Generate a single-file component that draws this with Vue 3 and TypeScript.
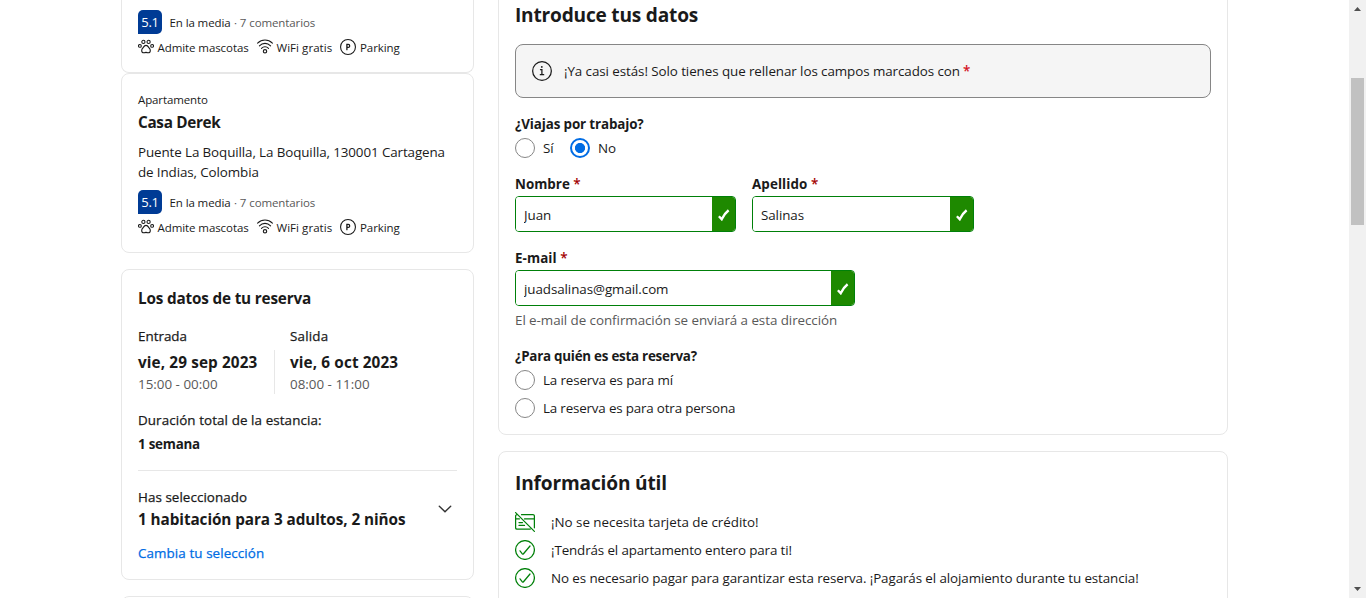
<script setup lang="ts">
import { ref } from 'vue'

interface Stay {
  kind?: string
  name?: string
  address?: [string, string]
}

const stays: Stay[] = [
  {},
  {
    kind: 'Apartamento',
    name: 'Casa Derek',
    address: ['Puente La Boquilla, La Boquilla, 130001 Cartagena', 'de Indias, Colombia'],
  },
]
const business = ref<'si' | 'no'>('no')
const guest = ref<'me' | 'other' | ''>('')
const firstName = ref('Juan')
const lastName = ref('Salinas')
const email = ref('juadsalinas@gmail.com')
</script>

<template>
  <div class="page">
    <main class="columns">
      <aside class="side">
        <section v-for="(stay, n) in stays" :key="n" class="card stay" :class="{ compact: !stay.name }">
          <template v-if="stay.name && stay.address">
            <div class="kind">{{ stay.kind }}</div>
            <div class="stay-name">{{ stay.name }}</div>
            <div class="address">{{ stay.address[0] }}<br />{{ stay.address[1] }}</div>
          </template>
          <div class="review">
            <span class="score">5.1</span>
            <span class="rating">En la media</span>
            <span class="reviews">· 7 comentarios</span>
          </div>
          <div class="facilities">
            <span class="facility pets">
              <svg class="ico" viewBox="0 0 16 16">
                <circle cx="5.4" cy="2.9" r="1.6" />
                <circle cx="10.6" cy="2.9" r="1.6" />
                <circle cx="1.9" cy="6.9" r="1.4" />
                <circle cx="14.1" cy="6.9" r="1.4" />
                <path d="M8 6.4c-1.500 0-2.100 1-2.700 2-.5.9-1.600 1.400-1.600 3 0 1.500 1 2.400 2.200 2.400.8 0 1.300-.4 2.100-.4s1.300.4 2.100.4c1.200 0 2.200-.9 2.200-2.400 0-1.600-1.100-2.100-1.600-3-.6-1-1.200-2-2.700-2z" />
              </svg>
              Admite mascotas
            </span>
            <span class="facility wifi">
              <svg class="ico" viewBox="0 0 16 16">
                <path d="M.6 4.100C4.900-.1 11.100-.1 15.400 4.100M2.400 6.800c3.200-3.200 8-3.200 11.200 0M4.500 9.300c2-2 5-2 7 0" />
                <circle cx="8" cy="12.300" r="1.700" />
              </svg>
              WiFi gratis
            </span>
            <span class="facility parking">
              <svg class="ico" viewBox="0 0 16 16">
                <circle cx="8" cy="8" r="7.450" />
                <path class="heavy" d="M6.900 10.700V5.400h1.300a1.500 1.500 0 0 1 0 3H6.900" />
              </svg>
              Parking
            </span>
          </div>
        </section>

        <section class="card booking">
          <h3 class="booking-title">Los datos de tu reserva</h3>
          <div class="dates">
            <div class="date">
              <div class="medium">Entrada</div>
              <div class="day">vie, 29 sep 2023</div>
              <div class="hours">15:00 - 00:00</div>
            </div>
            <div class="date out">
              <div class="medium out-label">Salida</div>
              <div class="day">vie, 6 oct 2023</div>
              <div class="hours">08:00 - 11:00</div>
            </div>
          </div>
          <div class="medium duration">Duración total de la estancia:</div>
          <div class="weeks">1 semana</div>
          <div class="selection">
            <div>
              <div class="medium chosen">Has seleccionado</div>
              <div class="room">1 habitación para 3 adultos, 2 niños</div>
            </div>
            <svg class="chevron" viewBox="0 0 24 24"><path d="M6.300 9.200l5.700 5.600 5.700-5.600" /></svg>
          </div>
          <a class="medium change">Cambia tu selección</a>
        </section>

        <section class="card next"></section>
      </aside>

      <div class="content">
        <section class="card form">
          <h2 class="heading intro">Introduce tus datos</h2>
          <div class="notice">
            <svg class="ico20" viewBox="0 0 20 20">
              <circle cx="10" cy="10" r="9.350" />
              <path d="M8.500 8.700h1.400v4.600M8.300 13.700h3.400" />
              <circle class="dot" cx="9.800" cy="5.900" r=".9" />
            </svg>
            <span class="almost">¡Ya casi estás! Solo tienes que rellenar los campos marcados con</span>
            <span class="star bright">*</span>
          </div>

          <div class="label trip">¿Viajas por trabajo?</div>
          <div class="radios">
            <label class="option yes"><input v-model="business" type="radio" value="si" class="radio" />Sí</label>
            <label class="option"><input v-model="business" type="radio" value="no" class="radio" />No</label>
          </div>

          <div class="fields">
            <div class="field first">
              <div class="label">Nombre <span class="star">*</span></div>
              <div class="box"><input v-model="firstName" class="text" /><span class="ok"><svg viewBox="0 0 12 12"><path d="M.9 7.200L3.700 10.200Q6.300 4.800 10.600 1.300" /></svg></span></div>
            </div>
            <div class="field last">
              <div class="label surname">Apellido <span class="star">*</span></div>
              <div class="box"><input v-model="lastName" class="text" /><span class="ok"><svg viewBox="0 0 12 12"><path d="M.9 7.200L3.700 10.200Q6.300 4.800 10.600 1.300" /></svg></span></div>
            </div>
          </div>
          <div class="field mail">
            <div class="label mail-label">E-mail <span class="star">*</span></div>
            <div class="box"><input v-model="email" class="text" /><span class="ok"><svg viewBox="0 0 12 12"><path d="M.9 7.200L3.700 10.200Q6.300 4.800 10.600 1.300" /></svg></span></div>
          </div>
          <div class="help">El e-mail de confirmación se enviará a esta dirección</div>

          <div class="label who">¿Para quién es esta reserva?</div>
          <div class="stack">
            <label class="option me"><input v-model="guest" type="radio" value="me" class="radio" />La reserva es para mí</label>
            <label class="option other"><input v-model="guest" type="radio" value="other" class="radio" />La reserva es para otra persona</label>
          </div>
        </section>

        <section class="card info">
          <h2 class="heading useful">Información útil</h2>
          <ul class="facts">
            <li class="fact f1">
              <svg class="ico20 green" viewBox="0 0 20 20">
                <path d="M6.500 2.700H18a1.400 1.400 0 0 1 1.400 1.400v11.700M2.300 2.700H2A1.400 1.400 0 0 0 .6 4.100v11.600a1.400 1.400 0 0 0 1.400 1.400h13.300M.6 6.900h3.800M9.500 6.900h9.900M4 10.600h3.500M4 13.400h5.500M.6.600l18.800 18.800" />
              </svg>
              ¡No se necesita tarjeta de crédito!
            </li>
            <li class="fact f2">
              <svg class="ico20 green" viewBox="0 0 20 20"><circle cx="10" cy="10" r="9.400" /><path d="M5 10.800l2.500 3.200c.2.300.6.300.8 0L15 6" /></svg>
              ¡Tendrás el apartamento entero para ti!
            </li>
            <li class="fact f3">
              <svg class="ico20 green" viewBox="0 0 20 20"><circle cx="10" cy="10" r="9.400" /><path d="M5 10.800l2.500 3.200c.2.300.6.300.8 0L15 6" /></svg>
              No es necesario pagar para garantizar esta reserva. ¡Pagarás el alojamiento durante tu estancia!
            </li>
          </ul>
        </section>
      </div>
    </main>

    <div class="scrollbar">
      <svg class="arrow" viewBox="0 0 17 17"><path d="M5 11l3.500-4 3.500 4z" /></svg>
      <div class="track"><div class="thumb"></div></div>
      <svg class="arrow" viewBox="0 0 17 17"><path d="M5 6l3.500 4L12 6z" /></svg>
    </div>
  </div>
</template>

<style>
body { margin: 0; overflow: hidden; }
</style>

<style scoped>
* { box-sizing: border-box; }
.page {
  display: flex;
  height: 598px;
  overflow: hidden;
  background: #fff;
  color: #1a1a1a;
  font: 400 13.4px/20px "Open Sans", "Noto Sans", sans-serif;
  white-space: nowrap;
}
.columns { display: flex; flex: 1; gap: 24px; padding-left: 121px; }
.side { width: 353px; }
.content { width: 730px; margin-top: -16px; }
.card { border: 1px solid #e7e7e7; border-radius: 8px; padding: 16px; }
h2, h3, ul { margin: 0; padding: 0; }

.stay { height: 180px; }
.compact { height: 73px; padding-top: 2px; border-top: 0; border-radius: 0 0 8px 8px; }
.kind { margin-top: 1px; font-size: 11.5px; line-height: 18px; letter-spacing: -.12px; }
.stay-name { margin-top: 1px; font-weight: 700; font-size: 15.3px; line-height: 24px; letter-spacing: -.32px; }
.address { margin-top: 8px; letter-spacing: -.11px; }
.review { display: flex; align-items: center; height: 24px; margin-top: 8px; font-size: 11.5px; letter-spacing: -.1px; }
.score {
  width: 24px; height: 24px; margin-right: 7.500px;
  border-radius: 5px 5px 5px 0;
  background: #003b95; color: #fff;
  font-size: 13px; font-weight: 500; line-height: 25px; text-align: center; letter-spacing: -.3px;
}
.rating { margin-right: 3.500px; padding-top: 1px; }
.reviews { padding-top: 1px; color: #595959; }
.facilities { display: flex; height: 20px; margin-top: 4px; font-size: 11.5px; }
.facility { display: flex; align-items: center; gap: 3.500px; }
.pets { width: 119px; letter-spacing: -.08px; }
.wifi { width: 83px; letter-spacing: .05px; }
.parking { gap: 4px; letter-spacing: -.07px; }
.ico { width: 16px; height: 16px; flex: none; margin-top: -2px; fill: none; stroke: #1a1a1a; stroke-width: 1.100; stroke-linecap: round; }
.heavy { stroke-width: 1.300; }

.booking { height: 311px; margin-top: 16px; }
.booking-title { font-weight: 700; font-size: 15.3px; line-height: 24px; letter-spacing: -.18px; }
.dates { display: grid; grid-template-columns: 136px 1fr; margin-top: 16px; }
.date { display: flex; flex-direction: column; }
.out { padding-left: 16px; background: linear-gradient(#e7e7e7, #e7e7e7) 0 24px / 1px 44px no-repeat; }
.medium { font-weight: 500; -webkit-text-stroke: .25px currentColor; }
.out-label { letter-spacing: .2px; }
.day { margin-top: 4px; font-weight: 700; font-size: 15.3px; line-height: 24px; letter-spacing: .12px; }
.hours { color: #595959; }
.duration { margin-top: 16px; letter-spacing: .09px; }
.weeks { margin-top: 4px; font-weight: 700; letter-spacing: -.24px; }
.selection { display: flex; justify-content: space-between; align-items: center; margin-top: 16px; padding-top: 16px; border-top: 1px solid #e7e7e7; }
.chosen { letter-spacing: .06px; }
.room { font-weight: 700; font-size: 15.3px; line-height: 24px; letter-spacing: -.08px; }
.chevron { width: 24px; height: 24px; fill: none; stroke: #333; stroke-width: 1.400; stroke-linecap: round; }
.change { display: block; margin-top: 12px; color: #006ce4; letter-spacing: .09px; }
.next { height: 60px; margin-top: 16px; }

.form { height: 451px; }
.heading { font-weight: 700; font-size: 19.100px; line-height: 28px; }
.intro { letter-spacing: -.2px; }
.useful { letter-spacing: -.16px; margin-top: 1px; }
.notice { display: flex; align-items: center; height: 54px; margin-top: 15px; padding: 0 16px; border: 1px solid #868686; border-radius: 8px; background: #f5f5f5; }
.ico20 { width: 20px; height: 20px; flex: none; fill: none; stroke: #1a1a1a; stroke-width: 1.250; stroke-linecap: round; }
.dot { fill: #1a1a1a; stroke: none; }
.green { stroke: #008009; }
.almost { margin: 0 3px 0 12px; letter-spacing: -.08px; }
.star { color: #a30000; font-weight: 600; }
.bright { color: #d4111e; }
.label { font-weight: 700; }
.trip { margin-top: 16px; letter-spacing: -.13px; }
.surname { letter-spacing: .1px; }
.mail-label { letter-spacing: .06px; }
.radios { display: flex; margin-top: 4px; }
.option { display: flex; align-items: center; gap: 8px; height: 20px; }
.yes { width: 55px; }
.radio { appearance: none; width: 20px; height: 20px; margin: 0; border: 1px solid #868686; border-radius: 50%; background: #fff; }
.radio:checked { border: 2px solid #006ce4; background: radial-gradient(circle, #006ce4 4.700px, #fff 5.400px); }
.fields { display: flex; gap: 16px; margin-top: 16px; }
.first { width: 221px; }
.last { width: 222px; }
.mail { width: 340px; margin-top: 16px; }
.box { display: flex; height: 36px; margin-top: 2px; overflow: hidden; border: 1px solid #008009; border-radius: 4px; }
.text { flex: 1; min-width: 0; border: 0; outline: 0; padding: 2px 8px 0; background: #fff; color: #1a1a1a; font: inherit; letter-spacing: -.08px; }
.ok { display: flex; align-items: center; justify-content: center; width: 23px; background: #1e8900; }
.ok svg { width: 12px; height: 12px; margin-top: 2px; fill: none; stroke: #fff; stroke-width: 2.400; }
.help { margin-top: 4px; color: #595959; letter-spacing: -.06px; }
.who { margin-top: 16px; letter-spacing: -.25px; }
.stack { display: flex; flex-direction: column; gap: 8px; margin-top: 4px; }
.me { letter-spacing: -.15px; }
.other { letter-spacing: -.18px; }

.info { height: 220px; margin-top: 16px; }
.facts { display: flex; flex-direction: column; gap: 8px; margin-top: 15px; list-style: none; }
.fact { display: flex; align-items: center; gap: 16px; height: 20px; }
.f1 { letter-spacing: -.025px; }
.f2 { letter-spacing: -.13px; }
.f3 { letter-spacing: -.1px; }

.scrollbar { display: flex; flex-direction: column; width: 17px; background: #f1f1f1; }
.arrow { width: 17px; height: 17px; fill: #505050; }
.track { flex: 1; padding: 61px 2px 0; }
.thumb { height: 147px; background: #c1c1c1; }
</style>
